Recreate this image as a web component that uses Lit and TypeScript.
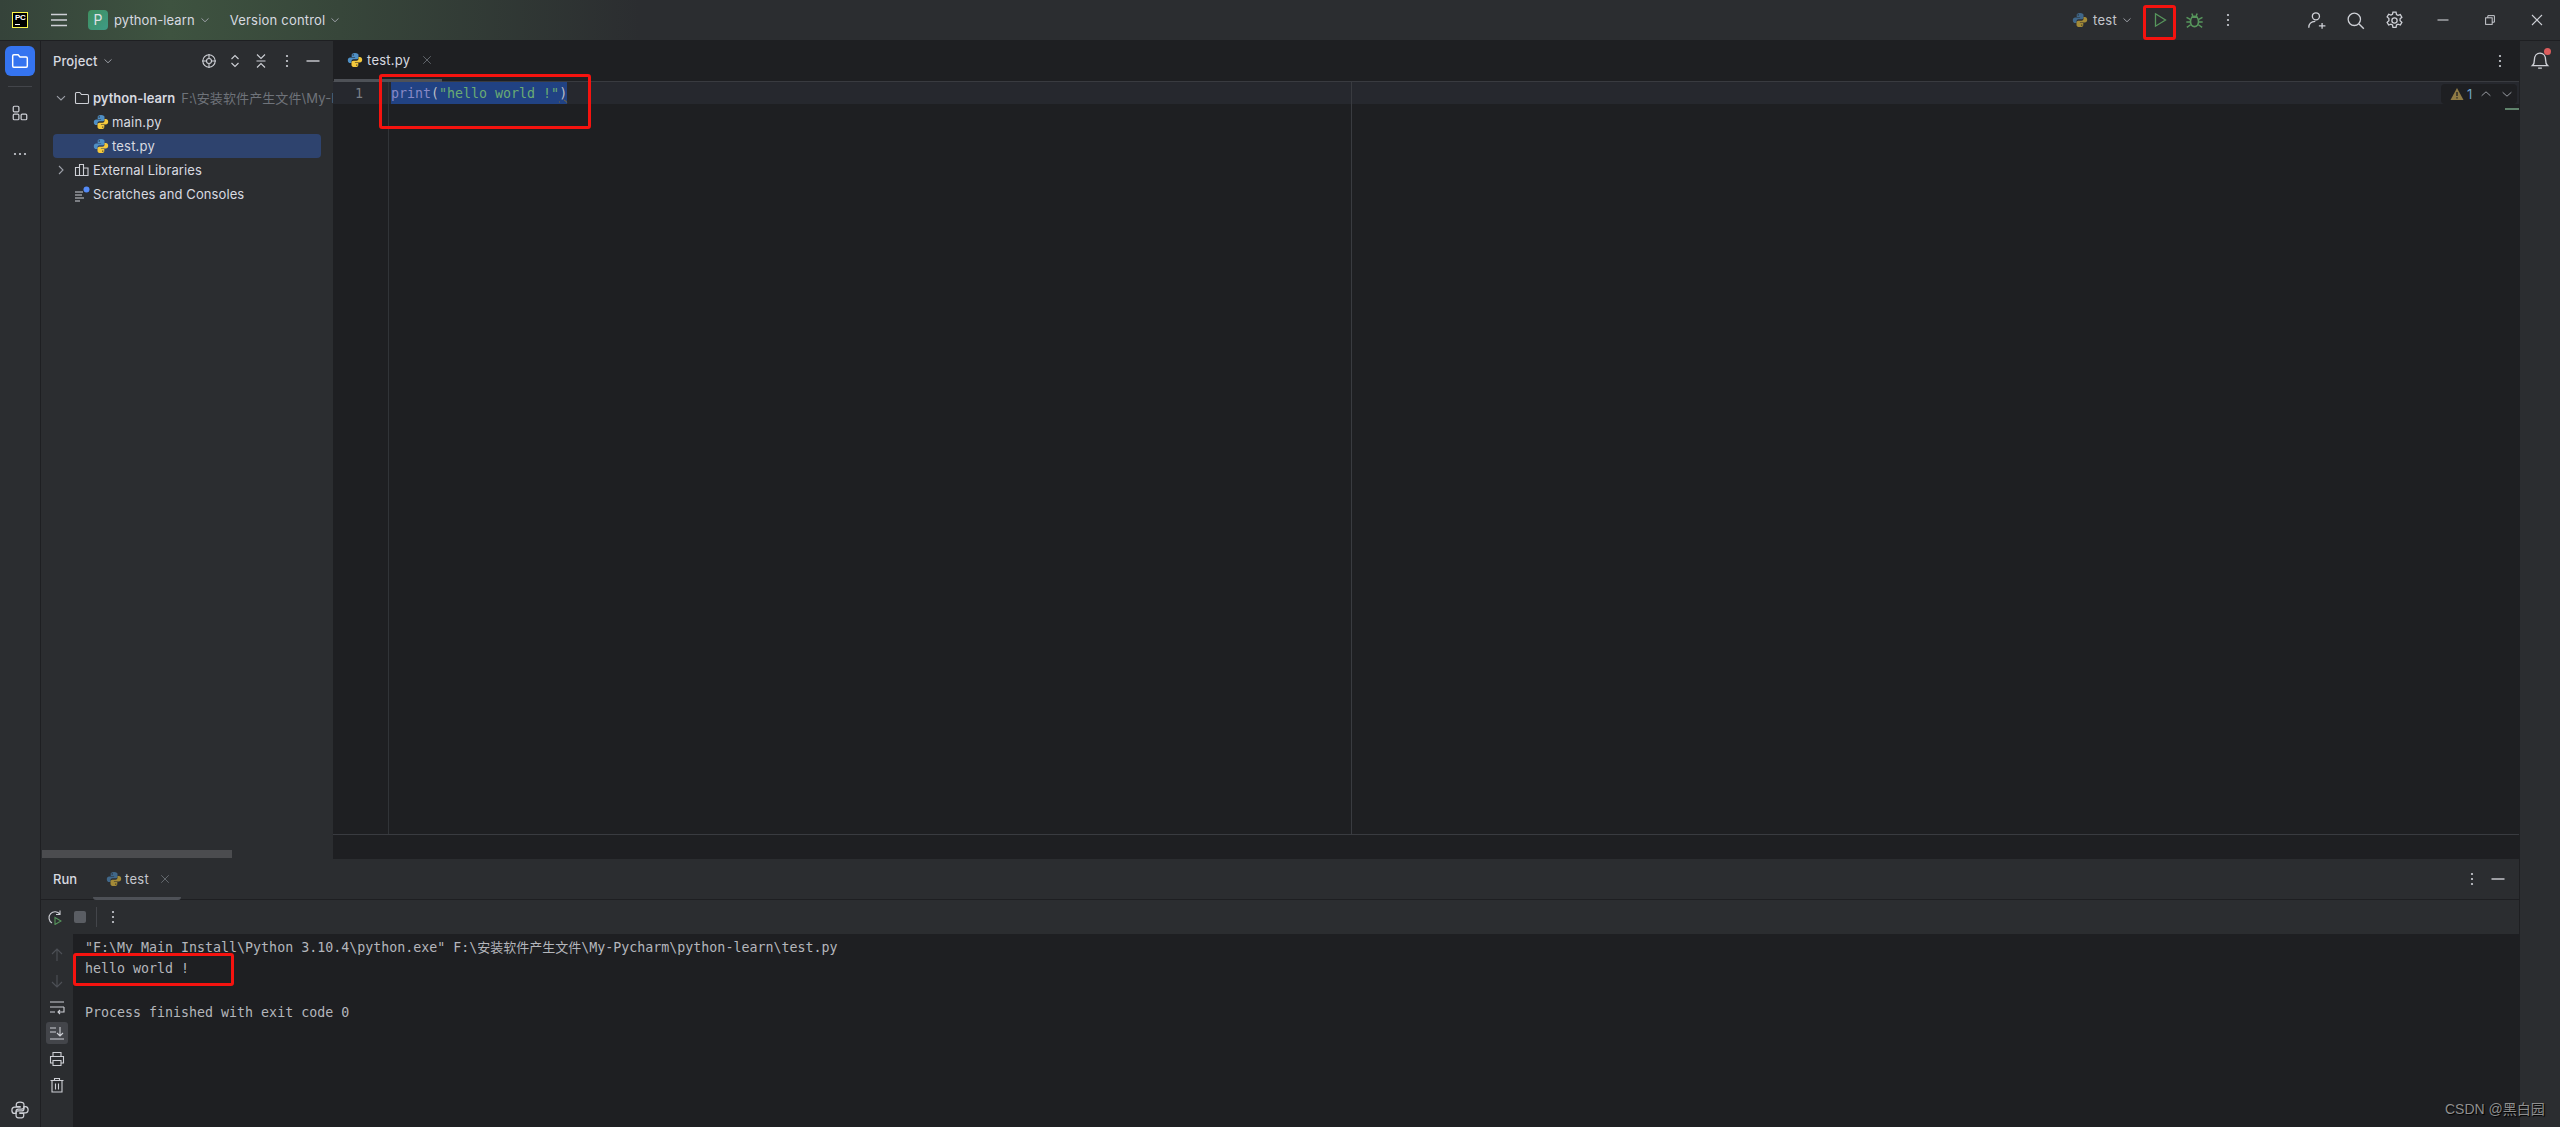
import { LitElement, html, css, svg } from "lit";
import { customElement } from "lit/decorators.js";

const ic = (body: unknown, size = 16, cls = "") =>
  html`<svg class="ic ${cls}" width=${size} height=${size} viewBox="0 0 16 16" fill="none" stroke="currentColor" stroke-width="1.1">${body}</svg>`;

const chevDown = svg`<path d="M4 6.200 8 10l4-3.800"/>`;
const chevRight = svg`<path d="M6 4l4 4-4 4"/>`;
const dotsV = svg`<g fill="currentColor" stroke="none"><circle cx="8" cy="3" r="1.100"/><circle cx="8" cy="8" r="1.100"/><circle cx="8" cy="13" r="1.100"/></g>`;
const pyBlue = "M8 .9C5.200.9 4.700 2 4.700 3v1.900h3.400v.6H3.100C1.900 5.500.8 6.500.8 8.200s1 2.900 2.300 2.900h1.400V9.200c0-1.100.9-2 2-2h3.200c1 0 1.800-.8 1.800-1.800V3C11.500 1.900 10.600.9 8 .9z";
const py = (dim = false) => html`<svg class="ic" width="16" height="16" viewBox="0 0 16 16" style=${dim ? "opacity:.6" : ""}>
  <path d=${pyBlue} fill="#4f8fc4"/><path d=${pyBlue} fill="#f4c93c" transform="rotate(180 8 8)"/>
  <circle cx="6.200" cy="2.900" r=".7" fill="#1e1f22"/><circle cx="9.800" cy="13.100" r=".7" fill="#1e1f22"/></svg>`;

@customElement("app-root")
export class AppRoot extends LitElement {
  static styles = css`
    :host { display: flex; flex-direction: column; position: relative; width: 100vw; height: 100vh; overflow: hidden; background: #1e1f22; color: #d8dae0; font: 13px/16px Inter, "Noto Sans CJK SC", sans-serif; }
    .ic { display: block; flex: none; color: #ced0d6; }
    .titlebar { flex: none; box-sizing: border-box; height: 41px; border-bottom: 1px solid #1e1f22; display: flex; align-items: center; background: linear-gradient(90deg, #35433a 0, #3e5340 170px, #37463a 340px, #2b2d30 640px); }
    .logo { flex: none; box-sizing: border-box; width: 16px; height: 16px; margin-left: 12px; background: #000; border: 1px solid #fcf84a; color: #fff; font: 700 8px/9px "Liberation Sans", sans-serif; padding-left: 2px; letter-spacing: -.4px; position: relative; }
    .logo::after { content: ""; position: absolute; left: 2px; bottom: 2px; width: 5px; height: 1px; background: #fff; }
    .menu { margin-left: 23px; }
    .badge { flex: none; width: 20px; height: 20px; margin-left: 21px; border-radius: 4px; background: linear-gradient(135deg, #3f8f5f, #3e9b86); color: #dfe1e5; font-size: 14px; line-height: 20px; text-align: center; }
    .tb-label { margin-left: 6px; white-space: nowrap; letter-spacing: .1px; }
    .tb-label.vc { margin-left: 18px; letter-spacing: .2px; }
    .tb-chev { margin-left: 3px; color: #9da0a8; }
    .grow { flex: 1; }
    .tb-test { margin-left: 5px; color: #c4c6cc; letter-spacing: .3px; }
    .tb-slot { flex: none; width: 34px; height: 40px; display: flex; align-items: center; justify-content: center; }
    .tb-slot.m1 { margin-left: 9px; }
    .tb-slot.w39 { width: 39px; }
    .tb-slot.m2 { margin-left: 52px; }
    .tb-slot.w47 { width: 47px; }
    .tb-slot.m3 { margin-left: 5px; }
    .green { color: #57965c; }
    .main { flex: 1; min-height: 0; display: flex; }
    .strip { flex: none; width: 40px; border-right: 1px solid #1e1f22; background: #2b2d30; display: flex; flex-direction: column; align-items: center; }
    .strip-btn { width: 30px; height: 30px; margin-top: 5px; border-radius: 6px; background: #3574f0; display: flex; align-items: center; justify-content: center; }
    .strip-btn .ic { color: #fff; }
    .strip-sep { width: 24px; height: 1px; background: #43454a; margin-top: 10px; }
    .strip .pl { margin-top: 17px; }
    .strip .more { margin-top: 24px; }
    .strip .pc { margin-bottom: 8px; }
    .center { flex: 1; min-width: 0; display: flex; flex-direction: column; border-right: 1px solid #1e1f22; }
    .upper { flex: none; height: 818px; display: flex; }
    .project { flex: none; width: 292px; background: #2b2d30; display: flex; flex-direction: column; overflow: hidden; }
    .p-head { flex: none; height: 40px; display: flex; align-items: center; padding-left: 12px; }
    .p-title { width: 45px; letter-spacing: .1px; font-weight: 500; }
    .p-chev { margin-left: 3px; color: #9da0a8; }
    .p-tool { flex: none; width: 26px; display: flex; justify-content: center; }
    .p-tools { margin-left: 81px; display: flex; }
    .tree { flex: 1; padding: 5px 0 0 12px; }
    .row { box-sizing: border-box; height: 24px; width: 268px; display: flex; align-items: center; white-space: nowrap; border-radius: 4px; letter-spacing: .1px; }
    .row.sel { background: #2e436e; }
    .row.file { padding-left: 40px; letter-spacing: .2px; }
    .row.file span { margin-left: 3px; }
    .tw { flex: none; width: 16px; height: 16px; color: #9da0a8; margin-right: 5px; }
    .row > .ic + span { margin-left: 3px; }
    .bold { font-weight: 600; letter-spacing: 0; }
    .path { flex: none; width: 153px; overflow: hidden; color: #6f737a; margin-left: 6px; font-size: 13px; }
    .hbar { flex: none; width: 190px; height: 8px; margin: 0 0 1px 1px; background: #4b4c4f; }
    .editor { flex: 1; min-width: 0; display: flex; flex-direction: column; background: #1e1f22; }
    .tabs { flex: none; box-sizing: border-box; height: 41px; border-bottom: 1px solid #393b40; display: flex; }
    .tab { box-sizing: border-box; flex: none; width: 108px; height: 41px; margin-left: 1px; padding: 0 0 1px 13px; border-bottom: 3px solid #4e5157; display: flex; align-items: center; }
    .tab span { margin-left: 4px; letter-spacing: .25px; }
    .close { color: #6f737a; margin-left: 11px; }
    .tabs .dots { margin: 12px 11px 0 auto; }
    .code { flex: 1; min-height: 0; display: flex; font: 13.300px/20px "DejaVu Sans Mono", monospace; position: relative; }
    .gutter { flex: none; box-sizing: border-box; width: 56px; border-right: 1px solid #313438; }
    .ln { box-sizing: border-box; height: 22px; background: #26282e; color: #7a7e85; padding: 2px 0 0 22px; }
    .text { flex: none; box-sizing: border-box; width: 963px; border-right: 1px solid #393b40; }
    .band { height: 22px; background: #26282e; white-space: pre; }
    .text .band { padding-left: 2px; }
    .selt { display: inline-block; box-sizing: border-box; background: #214283; height: 22px; padding-top: 2px; color: #bcbec4; }
    .fn { color: #8888c6; } .st { color: #6aab73; }
    .sq { text-decoration: underline wavy #7a6a3a 1px; }
    .rest { flex: 1; }
    .ed-foot { flex: none; height: 24px; border-top: 1px solid #393b40; }
    .inspect { position: absolute; right: 2px; top: 2px; width: 76px; height: 20px; background: #1e1f22; border-radius: 4px; display: flex; align-items: center; font: 13px/20px Inter, sans-serif; padding-left: 9px; box-sizing: border-box; color: #6ea5c9; }
    .inspect .num { margin-left: 3px; width: 9px; }
    .inspect .ia { margin-left: 3px; color: #9da0a8; }
    .inspect .ib { margin-left: 7px; color: #9da0a8; }
    .marker { position: absolute; right: 0; top: 26px; width: 14px; height: 2px; background: #5f826b; }
    .run { flex: 1; min-height: 0; display: flex; flex-direction: column; background: #1e1f22; }
    .r-head { flex: none; box-sizing: border-box; height: 41px; background: #2b2d30; border-bottom: 1px solid #1e1f22; display: flex; align-items: center; padding-left: 12px; }
    .r-title { width: 40px; font-weight: 500; }
    .r-tab { box-sizing: border-box; flex: none; width: 88px; height: 41px; border-bottom: 3px solid #4e5157; display: flex; align-items: center; padding: 3px 0 0 13px; border-radius: 0 0 3px 3px; }
    .r-tab span { margin-left: 3px; color: #c4c6cc; letter-spacing: .3px; }
    .r-tab .close { margin-left: 10px; }
    .r-right { margin-left: auto; display: flex; align-items: center; padding-right: 13px; gap: 10px; }
    .r-tools { flex: none; height: 34px; background: #2b2d30; display: flex; align-items: center; padding-left: 5px; }
    .stop { width: 12px; height: 12px; background: #5a5d63; border-radius: 2px; margin-left: 12px; }
    .vsep { width: 1px; height: 20px; background: #43454a; margin: 0 8px 0 10px; }
    .console { flex: 1; min-height: 0; display: flex; }
    .c-gut { flex: none; width: 32px; background: #2b2d30; display: flex; flex-direction: column; align-items: center; padding-top: 13px; gap: 10px; }
    .c-gut .dim { color: #4e5157; }
    .c-sel { width: 22px; height: 22px; background: #43454a; border-radius: 3px; display: flex; align-items: center; justify-content: center; margin: -3px 0; }
    .out { flex: 1; padding: 2px 0 0 12px; font: 13.300px/22px "DejaVu Sans Mono", "Noto Sans CJK SC", monospace; color: #b4b6bc; white-space: pre; }
    .out div { height: 22px; }
    .cjk { font-family: "Noto Sans CJK SC", sans-serif; font-size: 13px; }
    .rstrip { flex: none; width: 40px; background: #2b2d30; display: flex; flex-direction: column; align-items: center; padding-top: 9px; box-sizing: border-box; }
    .bell { position: relative; width: 20px; height: 20px; }
    .red-dot { position: absolute; right: -1px; top: -2px; width: 7px; height: 7px; border-radius: 50%; background: #db5c5c; }
    .note { position: absolute; box-sizing: border-box; border: 3px solid #f5130f; border-radius: 3px; pointer-events: none; }
    .n1 { left: 379px; top: 74px; width: 212px; height: 55px; }
    .n2 { left: 2143px; top: 5px; width: 33px; height: 35px; }
    .n3 { left: 73px; top: 953px; width: 161px; height: 33px; }
    .mark { position: absolute; left: 2445px; top: 1101px; font: 14px/16px "Liberation Sans", "Noto Sans CJK SC", sans-serif; color: #8f8f8f; text-shadow: 1px 1px 1px #000; white-space: nowrap; }
  `;

  render() {
    const x12 = ic(svg`<path d="M3 3l10 10M13 3 3 13"/>`, 12, "close");
    return html`
      <div class="titlebar">
        <div class="logo">PC</div>
        ${ic(svg`<path d="M0 2.500h16M0 8h16M0 13.500h16" stroke-width="1.300"/>`, 16, "menu")}
        <div class="badge">P</div>
        <span class="tb-label">python-learn</span>
        ${ic(chevDown, 14, "tb-chev")}
        <span class="tb-label vc">Version control</span>
        ${ic(chevDown, 14, "tb-chev")}
        <div class="grow"></div>
        ${py(true)}
        <span class="tb-test">test</span>
        ${ic(chevDown, 14, "tb-chev")}
        <div class="tb-slot m1">${ic(svg`<path d="M3.500 1.800 13.500 8l-10 6.200z" stroke-width="1.300"/>`, 16, "green")}</div>
        <div class="tb-slot">${ic(svg`<ellipse cx="8" cy="9" rx="3.800" ry="4.800" stroke-width="1.600"/><path d="M4.800 5h6.400M5.500 1.500 6.500 4M10.500 1.500 9.500 4M.5 5l3.500 2M15.500 5 12 7M.3 9.500h3.800M15.700 9.500h-3.800M.8 14.500l3.500-2.500M15.200 14.500l-3.500-2.500" stroke-width="1.400"/>`, 17, "green")}</div>
        <div class="tb-slot">${ic(dotsV)}</div>
        <div class="tb-slot m2 w39">${ic(svg`<circle cx="7.500" cy="4.500" r="3"/><path d="M1.500 14c0-3 2-5 5.500-5.200M10 12.500h5.500M12.700 10v5"/>`, 19)}</div>
        <div class="tb-slot w39">${ic(svg`<circle cx="7" cy="7" r="5.200"/><path d="M11 11l4 4" stroke-width="1.200"/>`, 19)}</div>
        <div class="tb-slot w39">${ic(svg`<circle cx="8" cy="8" r="2.200"/><path d="M6.700 1h2.600l.4 2 1.300.7 1.900-.7 1.300 2.300-1.500 1.300v1.600l1.500 1.300-1.300 2.300-1.900-.7-1.300.7-.4 2H6.700l-.4-2-1.300-.7-1.900.7-1.300-2.300 1.500-1.300V6.300L1.800 5l1.300-2.300 1.900.7 1.300-.7z"/>`, 19)}</div>
        <div class="tb-slot m3 w47">${ic(svg`<path d="M2.500 8h11"/>`)}</div>
        <div class="tb-slot w47">${ic(svg`<rect x="3" y="5.500" width="7.500" height="7.500"/><path d="M5.500 5.500V3h7.500v7.500h-2.500"/>`, 14)}</div>
        <div class="tb-slot w47">${ic(svg`<path d="M3 3l10 10M13 3 3 13"/>`)}</div>
      </div>

      <div class="main">
        <div class="strip">
          <div class="strip-btn">${ic(svg`<path d="M1.500 3.500c0-.6.400-1 1-1h3.800l1.700 2h5.500c.600 0 1 .4 1 1v7c0 .6-.4 1-1 1h-11c-.6 0-1-.4-1-1z" stroke-width="1.300"/>`, 18)}</div>
          <div class="strip-sep"></div>
          ${ic(svg`<rect x="2" y="2" width="5" height="5" rx="1"/><rect x="2" y="9" width="5" height="5" rx="1"/><rect x="9" y="9" width="5" height="5" rx="1"/>`, 18, "pl")}
          ${ic(svg`<g fill="currentColor" stroke="none"><circle cx="3" cy="8" r="1.100"/><circle cx="8" cy="8" r="1.100"/><circle cx="13" cy="8" r="1.100"/></g>`, 16, "more")}
          <div class="grow"></div>
          ${ic(svg`<path d=${pyBlue}/><path d=${pyBlue} transform="rotate(180 8 8)"/>`, 18, "pc")}
        </div>

        <div class="center">
          <div class="upper">
            <div class="project">
              <div class="p-head">
                <span class="p-title">Project</span>
                ${ic(chevDown, 14, "p-chev")}
                <div class="p-tools">
                  <div class="p-tool">${ic(svg`<circle cx="8" cy="8" r="6.200"/><circle cx="8" cy="8" r="2.500"/><path d="M8 1v4M8 11v4M1 8h4M11 8h4"/>`)}</div>
                  <div class="p-tool">${ic(svg`<path d="M4.500 6 8 2.500 11.500 6M4.500 10 8 13.500l3.500-3.500"/>`)}</div>
                  <div class="p-tool">${ic(svg`<path d="M4 1.500 8 5.500l4-4M4 14.500l4-4 4 4M3.500 8h9"/>`)}</div>
                  <div class="p-tool">${ic(dotsV)}</div>
                  <div class="p-tool">${ic(svg`<path d="M1.500 8h13" stroke-width="1.400"/>`)}</div>
                </div>
              </div>
              <div class="tree">
                <div class="row">${ic(chevDown, 16, "tw")}${ic(svg`<path d="M1.500 3.500c0-.6.400-1 1-1h3.300l1.700 2h6c.600 0 1 .4 1 1v7c0 .6-.4 1-1 1h-11c-.6 0-1-.4-1-1z"/>`)}<span class="bold">python-learn</span><span class="path">F:\\安装软件产生文件\\My-Pycharm</span></div>
                <div class="row file">${py()}<span>main.py</span></div>
                <div class="row file sel">${py()}<span>test.py</span></div>
                <div class="row">${ic(chevRight, 16, "tw")}${ic(svg`<path d="M1.500 5.500h4v8h-4zM5.500 2.500h4v11h-4zM9.500 6h4.500v7.500H9.500z"/>`)}<span>External Libraries</span></div>
                <div class="row"><span class="tw"></span>${ic(svg`<path d="M1 6h8M1 9h7M1 12h9M1 15h5" /><circle cx="12.500" cy="3.500" r="3" fill="#548af7" stroke="none"/>`)}<span>Scratches and Consoles</span></div>
              </div>
              <div class="hbar"></div>
            </div>

            <div class="editor">
              <div class="tabs">
                <div class="tab">${py()}<span>test.py</span>${x12}</div>
                ${ic(dotsV, 16, "dots")}
              </div>
              <div class="code">
                <div class="gutter"><div class="ln">1</div></div>
                <div class="text"><div class="band"><span class="selt"><span class="fn">print</span>(<span class="st">"hello world !"</span><span class="sq">)</span></span></div></div>
                <div class="rest"><div class="band"></div></div>
                <div class="inspect">
                  <svg class="ic" width="14" height="14" viewBox="0 0 14 14"><path d="M7 1 13.500 13H.5z" fill="#8f7a44"/><path d="M7 5v4M7 10.300v1.200" stroke="#1e1f22" stroke-width="1.300"/></svg>
                  <span class="num">1</span>
                  ${ic(svg`<path d="M3 10l5-4.500 5 4.500"/>`, 14, "ia")}
                  ${ic(svg`<path d="M3 6l5 4.500L13 6"/>`, 14, "ib")}
                </div>
                <div class="marker"></div>
              </div>
              <div class="ed-foot"></div>
            </div>
          </div>

          <div class="run">
            <div class="r-head">
              <span class="r-title">Run</span>
              <div class="r-tab">${py(true)}<span>test</span>${x12}</div>
              <div class="r-right">
                ${ic(dotsV)}
                ${ic(svg`<path d="M1.500 8h13" stroke-width="1.400"/>`)}
              </div>
            </div>
            <div class="r-tools">
              ${ic(svg`<path d="M14 5.500A6 6 0 1 0 6 14M14 1.500v4h-4"/><path d="M9 8.500l6 3.500-6 3.500z" stroke="#57965c"/>`, 16)}
              <div class="stop"></div>
              <div class="vsep"></div>
              ${ic(dotsV)}
            </div>
            <div class="console">
              <div class="c-gut">
                ${ic(svg`<path d="M8 14V2M3 7l5-5 5 5"/>`, 16, "dim")}
                ${ic(svg`<path d="M8 2v12M3 9l5 5 5-5"/>`, 16, "dim")}
                ${ic(svg`<path d="M1 3h14M1 8h14M1 13h5M15 8v5H9M11 11l-2 2 2 2"/>`)}
                <div class="c-sel">${ic(svg`<path d="M1 3h6M1 7h6M1 14h14M11 2v9M8 8l3 3 3-3"/>`)}</div>
                ${ic(svg`<path d="M4 5V1.500h8V5M4 12H1.500V5.500h13V12H12M4 9.500h8v5H4z"/>`)}
                ${ic(svg`<path d="M1.500 3.500h13M5.500 3.500V1.500h5v2M3 3.500v11.500h10V3.500M6.500 6.500v6M9.500 6.500v6"/>`)}
              </div>
              <div class="out"><div>"F:\\My_Main_Install\\Python 3.10.4\\python.exe" F:\\<span class="cjk">安装软件产生文件</span>\\My-Pycharm\\python-learn\\test.py</div><div>hello world !</div><div></div><div>Process finished with exit code 0</div></div>
            </div>
          </div>
        </div>

        <div class="rstrip">
          <div class="bell">
            ${ic(svg`<path d="M2 12.500c1.200-1 1.500-2 1.500-4.500C3.500 4.500 5.500 2.500 8 2.500s4.500 2 4.500 5.500c0 2.500.3 3.500 1.500 4.500zM6.500 14.500h3"/>`, 20)}
            <div class="red-dot"></div>
          </div>
        </div>
      </div>

      <div class="note n1"></div>
      <div class="note n2"></div>
      <div class="note n3"></div>
      <div class="mark">CSDN @黑白园</div>
    `;
  }
}
